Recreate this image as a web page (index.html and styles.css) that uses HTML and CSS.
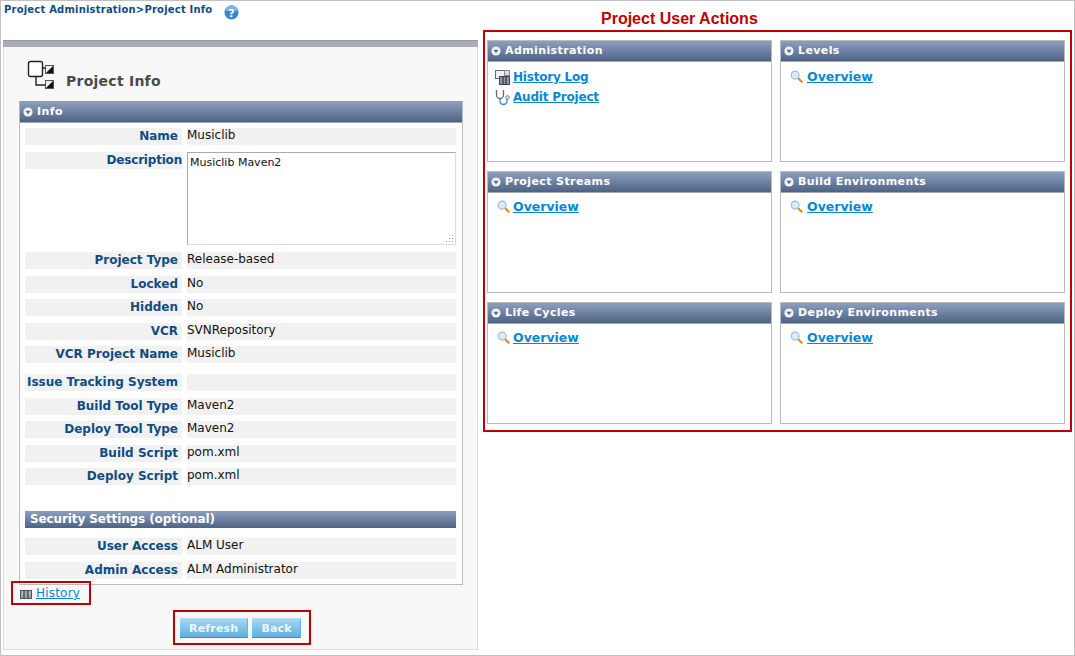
FILE: index.html
```html
<!DOCTYPE html>
<html lang="en">
<head>
  <meta charset="UTF-8">
  <title>Project Info</title>
  <link rel="stylesheet" href="styles.css">
</head>
<body>

  <svg class="defs">
    <defs>
      <symbol id="arrow" viewBox="0 0 10 10">
        <circle cx="5" cy="5" r="4.6" fill="#f2f2f2"/>
        <path d="M2.500 3.700h5L5 7.200z" fill="#5a6a84"/>
      </symbol>
      <symbol id="glass" viewBox="0 0 14 14">
        <path d="M8.600 8.600l4 4" stroke="#e8861a" stroke-width="2.200" stroke-linecap="round"/>
        <circle cx="5.500" cy="5.500" r="4.300" fill="#d8ecfb" stroke="#9cbcd4" stroke-width="1.200"/>
      </symbol>
    </defs>
  </svg>

  <div class="page">
    <div class="left">
      <div class="crumbs">
        <span>Project Administration&gt;Project Info</span>
        <svg class="help" width="15" height="15" viewBox="0 0 15 15">
          <circle cx="7.500" cy="7.500" r="7" fill="#3a86c8"/>
          <path d="M1.500 6a6 6 0 0 1 12 0z" fill="#7db4e2"/>
          <text x="7.500" y="11.500" class="help-mark">?</text>
        </svg>
      </div>

      <div class="panel">
        <div class="panel-bar"></div>
        <div class="page-title">
          <svg width="30" height="29" viewBox="0 0 30 29">
            <rect x="1.500" y="1.500" width="14" height="15" rx="2" fill="#fff" stroke="#222" stroke-width="1.400"/>
            <path d="M15.500 8h3M9 16.500V25h9.500" fill="none" stroke="#222" stroke-width="1.400"/>
            <rect x="18.500" y="5.500" width="8" height="8" fill="#eee" stroke="#555"/>
            <path d="M26 6v7h-7z" fill="#111"/>
            <rect x="18.500" y="20.500" width="8" height="8" fill="#eee" stroke="#555"/>
            <path d="M26 21v7h-7z" fill="#111"/>
          </svg>
          <h1>Project Info</h1>
        </div>

        <div class="info">
          <div class="bar-head"><svg class="arrow"><use href="#arrow"/></svg>Info</div>
          <div class="info-body">
            <div class="row"><b>Name</b><span>Musiclib</span></div>
            <div class="row row-desc">
              <b>Description</b>
              <div class="desc">Musiclib Maven2
                <svg class="grip" width="9" height="9" viewBox="0 0 9 9">
                  <path d="M7 1h1v1H7zM7 4h1v1H7zM7 7h1v1H7zM4 4h1v1H4zM4 7h1v1H4zM1 7h1v1H1z" fill="#999"/>
                </svg>
              </div>
            </div>
            <div class="row"><b>Project Type</b><span>Release-based</span></div>
            <div class="row"><b>Locked</b><span>No</span></div>
            <div class="row"><b>Hidden</b><span>No</span></div>
            <div class="row"><b>VCR</b><span>SVNRepository</span></div>
            <div class="row"><b>VCR Project Name</b><span>Musiclib</span></div>
            <div class="row row-gap"><b>Issue Tracking System</b><span></span></div>
            <div class="row"><b>Build Tool Type</b><span>Maven2</span></div>
            <div class="row"><b>Deploy Tool Type</b><span>Maven2</span></div>
            <div class="row"><b>Build Script</b><span>pom.xml</span></div>
            <div class="row"><b>Deploy Script</b><span>pom.xml</span></div>
            <div class="sub-head">Security Settings (optional)</div>
            <div class="row"><b>User Access</b><span>ALM User</span></div>
            <div class="row"><b>Admin Access</b><span>ALM Administrator</span></div>
          </div>
        </div>

        <div class="history red">
          <svg width="12" height="11" viewBox="0 0 12 11">
            <rect x="0.500" y="2.500" width="11" height="8" fill="#9aa4ac" stroke="#555"/>
            <path d="M4 2.500v8M8 2.500v8" stroke="#333"/>
            <path d="M2 4h1M2 6h1M9 4h1M9 6h1" stroke="#eee"/>
          </svg>
          <a href="#">History</a>
        </div>

        <div class="buttons red">
          <button>Refresh</button>
          <button>Back</button>
        </div>
      </div>
    </div>

    <div class="right">
      <div class="actions-title">Project User Actions</div>
      <div class="actions red">
        <div class="card">
          <div class="bar-head"><svg class="arrow"><use href="#arrow"/></svg>Administration</div>
          <div class="card-body card-admin">
            <div class="action">
              <svg width="16" height="16" viewBox="0 0 16 16">
                <rect x="0.500" y="1.500" width="9" height="8" fill="#eef" stroke="#667"/>
                <rect x="9.500" y="1.500" width="5" height="5" fill="#ddd" stroke="#889"/>
                <rect x="4.500" y="7.500" width="10" height="8" fill="#8d99a3" stroke="#445"/>
                <path d="M8 7.500v8M11 7.500v8" stroke="#223"/>
              </svg>
              <a href="#">History Log</a>
            </div>
            <div class="action">
              <svg width="16" height="17" viewBox="0 0 16 17">
                <path d="M1.500 1v5a3.500 3.500 0 0 0 7 0V1" fill="none" stroke="#667" stroke-width="1.300"/>
                <path d="M5 9.500v2.500a3.500 3.500 0 0 0 7 0V10" fill="none" stroke="#3d8fd0" stroke-width="1.400"/>
                <circle cx="12.500" cy="8.500" r="1.800" fill="#dfe9f2" stroke="#778"/>
              </svg>
              <a href="#">Audit Project</a>
            </div>
          </div>
        </div>
        <div class="card">
          <div class="bar-head"><svg class="arrow"><use href="#arrow"/></svg>Levels</div>
          <div class="card-body card-first"><div class="action"><svg class="glass"><use href="#glass"/></svg><a href="#">Overview</a></div></div>
        </div>
        <div class="card">
          <div class="bar-head"><svg class="arrow"><use href="#arrow"/></svg>Project Streams</div>
          <div class="card-body"><div class="action"><svg class="glass"><use href="#glass"/></svg><a href="#">Overview</a></div></div>
        </div>
        <div class="card">
          <div class="bar-head"><svg class="arrow"><use href="#arrow"/></svg>Build Environments</div>
          <div class="card-body"><div class="action"><svg class="glass"><use href="#glass"/></svg><a href="#">Overview</a></div></div>
        </div>
        <div class="card">
          <div class="bar-head"><svg class="arrow"><use href="#arrow"/></svg>Life Cycles</div>
          <div class="card-body"><div class="action"><svg class="glass"><use href="#glass"/></svg><a href="#">Overview</a></div></div>
        </div>
        <div class="card">
          <div class="bar-head"><svg class="arrow"><use href="#arrow"/></svg>Deploy Environments</div>
          <div class="card-body"><div class="action"><svg class="glass"><use href="#glass"/></svg><a href="#">Overview</a></div></div>
        </div>
      </div>
    </div>
  </div>

</body>
</html>
```

FILE: styles.css
```css
html, body {
  margin: 0;
  padding: 0;
  background: #fff;
  overflow: hidden;
}

body {
  font-family: 'DejaVu Sans', Verdana, sans-serif;
  font-size: 12px;
  color: #111;
}

.defs {
  display: none;
}

.page {
  box-sizing: border-box;
  width: 1075px;
  height: 656px;
  border: 1px solid #c0c0c0;
  display: flex;
  align-items: flex-start;
}

.red {
  border: 2px solid #bf0000;
}

/* left column */
.left {
  width: 475px;
  margin-left: 2px;
}

.crumbs {
  height: 39px;
  padding: 3px 0 0 1px;
  box-sizing: border-box;
  display: flex;
  align-items: flex-start;
  gap: 12px;
  font-size: 10px;
  font-weight: bold;
  letter-spacing: 0.2px;
  color: #0f4c81;
}

.help {
  margin-top: 1px;
}

.help-mark {
  font-size: 11px;
  font-weight: bold;
  fill: #fff;
  text-anchor: middle;
}

.panel {
  height: 610px;
  box-sizing: border-box;
  background: #f8f8f8;
  border: 1px solid #ddd;
  border-top: 0;
  position: relative;
}

.panel-bar {
  height: 7px;
  margin: 0 -1px;
  background: #a9adb5;
  border-top: 1px solid #999;
  box-sizing: border-box;
}

.page-title {
  height: 54px;
  padding-left: 23px;
  display: flex;
  align-items: flex-start;
  gap: 9px;
}

.page-title svg {
  margin-top: 13px;
}

.page-title h1 {
  margin: 24px 0 0;
  font-size: 14px;
  line-height: 20px;
  letter-spacing: 0.25px;
  color: #4a4a4a;
}

.bar-head {
  display: flex;
  align-items: center;
  flex-shrink: 0;
  box-sizing: border-box;
  height: 21px;
  padding-bottom: 1px;
  background: linear-gradient(#8d9fbe, #4d6385);
  border-bottom: 1px solid #a8a8a8;
  color: #fff;
  font-size: 11px;
  font-weight: bold;
  letter-spacing: 0.4px;
}

.arrow {
  width: 10px;
  height: 10px;
  margin: 0 4px 0 3px;
}

.info {
  width: 444px;
  height: 484px;
  box-sizing: border-box;
  margin-left: 15px;
  background: #fff;
  border: 1px solid #bbb;
  border-top-color: #999;
}

.info-body {
  padding: 5px 5px 0;
}

.row {
  display: grid;
  grid-template-columns: 157px 269px;
  column-gap: 5px;
  height: 17px;
  margin-bottom: 6.500px;
  line-height: 15px;
}

.row b, .row span {
  background: #f1f1f1;
  display: block;
}

.row b {
  color: #0f4c81;
  text-align: right;
  padding-right: 4px;
  box-sizing: border-box;
  white-space: nowrap;
  line-height: 17px;
}

.row-desc {
  height: 94px;
}

.row-desc b {
  height: 17px;
  padding-right: 0;
  letter-spacing: -0.2px;
}

.row-gap {
  margin-top: 11px;
}

.desc {
  position: relative;
  box-sizing: border-box;
  height: 93px;
  background: #fff;
  border: 1px solid #ddd;
  border-top-color: #aaa;
  border-left-color: #aaa;
  padding: 2px;
  font-size: 11px;
  line-height: 15px;
}

.grip {
  position: absolute;
  right: 1px;
  bottom: 1px;
}

.sub-head {
  height: 17px;
  margin: 26px 1px 10px 0;
  padding-left: 5px;
  background: linear-gradient(#8d9fbe, #4d6385);
  color: #fff;
  font-weight: bold;
  letter-spacing: -0.1px;
  line-height: 17px;
}

.history {
  position: absolute;
  left: 7px;
  top: 541px;
  width: 80px;
  height: 24px;
  box-sizing: border-box;
  display: flex;
  align-items: center;
  gap: 4px;
  padding-left: 7px;
}

.history a {
  color: #0a87d0;
  letter-spacing: 0.2px;
}

.buttons {
  width: 138px;
  height: 35px;
  box-sizing: border-box;
  margin: 25px 0 0 169px;
  padding: 1px 0 0 5px;
  display: flex;
  align-items: center;
  gap: 4px;
}

.buttons button {
  height: 20px;
  padding: 0 9px;
  border: 0;
  border-top: 1px solid #b6e0f6;
  border-bottom: 1px solid #3b8cc4;
  border-right: 1px solid #6ab0dc;
  background: linear-gradient(#a6d6f2, #5cb0e2);
  color: #eef7fc;
  font-family: 'DejaVu Sans', Verdana, sans-serif;
  font-size: 11px;
  font-weight: bold;
  letter-spacing: 0.2px;
}

.buttons button:last-child {
  padding-right: 8px;
}

/* right column */
.right {
  width: 589px;
  margin-left: 5px;
}

.actions-title {
  height: 29px;
  padding: 9px 0 0 118px;
  box-sizing: border-box;
  font-family: 'Liberation Sans', Arial, sans-serif;
  font-size: 16px;
  font-weight: bold;
  color: #bf0000;
  white-space: nowrap;
}

.actions {
  box-sizing: border-box;
  height: 402px;
  padding: 8px 5px 5px 2px;
  display: grid;
  grid-template-columns: 285px 285px;
  grid-auto-rows: 122px;
  column-gap: 8px;
  row-gap: 9px;
}

.card {
  border: 1px solid #bbb;
  box-sizing: border-box;
  background: #fff;
}

.card:nth-child(odd) .action {
  gap: 3px;
}

.card-body {
  padding: 4px 8px;
}

.card-first {
  padding-top: 5px;
}

.action {
  display: flex;
  align-items: center;
  gap: 4px;
  height: 18px;
  font-size: 12.500px;
  font-weight: bold;
}

.action a {
  color: #0a87d0;
}

.card-admin {
  padding: 5px 7px;
}

.card-admin .action {
  height: 20px;
  font-size: 12px;
  letter-spacing: -0.2px;
}

.card-admin .action a {
  margin-left: -1px;
}

.glass {
  width: 13px;
  height: 13px;
  margin-left: 1px;
}
```
